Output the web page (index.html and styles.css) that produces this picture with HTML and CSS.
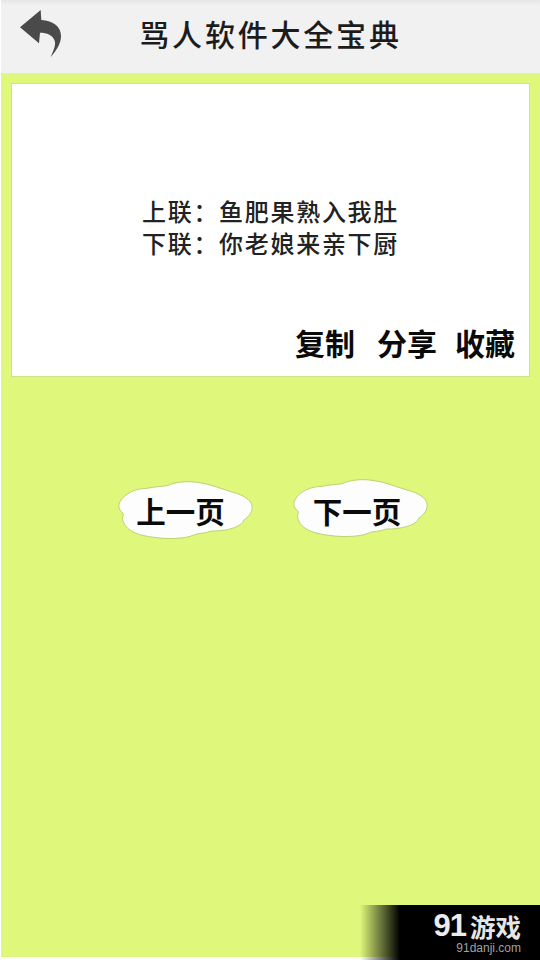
FILE: index.html
```html
<!DOCTYPE html>
<html lang="zh-CN">
<head>
<meta charset="utf-8">
<title>骂人软件大全宝典</title>
<link rel="stylesheet" href="styles.css">
</head>
<body>
<div class="screen">
  <header class="bar">
    <svg class="back" viewBox="0 0 240 210" aria-hidden="true">
      <path d="M122 30 L60 82 L117 130 L120 98 C140 98 160 105 165 125 C167 140 158 155 152 172 C170 150 183 130 183 108 C183 80 160 62 124 60 Z"/>
    </svg>
    <h1 class="title">骂人软件大全宝典</h1>
  </header>
  <main class="content">
    <section class="card">
      <div class="verse">
        <p>上联：鱼肥果熟入我肚</p>
        <p>下联：你老娘来亲下厨</p>
      </div>
      <div class="actions">
        <span class="action-first">复制</span>
        <span>分享</span>
        <span>收藏</span>
      </div>
    </section>
    <nav class="pager">
      <a class="cloud">
        <svg viewBox="20 30 410 180" aria-hidden="true"><path d="M25 105 C30 80 65 55 110 55 C130 50 150 50 170 47 C195 35 235 32 265 38 C300 42 335 58 378 70 C408 80 425 95 425 112 C425 130 412 142 400 150 C394 172 345 184 302 183 C282 192 265 188 250 195 C225 207 170 208 130 202 C90 197 50 187 38 155 C33 145 40 135 38 130 C30 125 24 115 25 105 Z"/></svg>
        <span>上一页</span>
      </a>
      <a class="cloud cloud-next">
        <svg viewBox="20 30 410 180" aria-hidden="true"><path d="M25 105 C30 80 65 55 110 55 C130 50 150 50 170 47 C195 35 235 32 265 38 C300 42 335 58 378 70 C408 80 425 95 425 112 C425 130 412 142 400 150 C394 172 345 184 302 183 C282 192 265 188 250 195 C225 207 170 208 130 202 C90 197 50 187 38 155 C33 145 40 135 38 130 C30 125 24 115 25 105 Z"/></svg>
        <span>下一页</span>
      </a>
    </nav>
  </main>
  <aside class="wm">
    <div class="wm-logo"><b>91</b><i>游戏</i></div>
    <div class="wm-url">91danji.com</div>
  </aside>
</div>
</body>
</html>
```
FILE: styles.css
```css
* { box-sizing: border-box; margin: 0; padding: 0; }
html, body { width: 540px; height: 960px; overflow: hidden; background: #fff; }
body { font-family: "Noto Sans CJK SC", "Liberation Sans", sans-serif; }
.screen { position: relative; width: 539px; height: 957px; margin-left: 1px; background: #dff77b; display: flex; flex-direction: column; }
.bar { height: 73px; background: linear-gradient(180deg, #e6e6e6 0, #f1f1f1 5px); display: flex; align-items: center; position: relative; justify-content: center; }
.back { position: absolute; left: -1px; top: 0; width: 80px; height: 70px; fill: #4a4a4a; }
.title { font-size: 30px; font-weight: 500; letter-spacing: 2.800px; color: #1c1c1c; line-height: 36px; margin-top: -7px; }
.content { flex: 1; display: flex; flex-direction: column; }
.card { margin: 10px 0 0 10px; width: 519px; height: 294px; background: #fff; border: 1px solid #cfe28c; position: relative; display: flex; flex-direction: column; }
.verse { margin-top: 111px; text-align: center; font-size: 24px; font-weight: 500; line-height: 32px; color: #222; letter-spacing: 1.700px; }
.actions { position: absolute; right: 14px; top: 238px; display: flex; gap: 18px; font-size: 30px; line-height: 40px; font-weight: 700; color: #0a0a0a; }
.action-first { margin-right: 4px; }
.pager { display: flex; margin: 103px 0 0 116px; gap: 38px; }
.cloud { position: relative; width: 137px; height: 60px; padding-right: 10px; display: flex; align-items: center; justify-content: center; }
.cloud svg { position: absolute; left: 0; top: 0; width: 137px; height: 60px; fill: #fdfdfd; stroke: #bcd274; stroke-width: 3; }
.cloud-next { padding-right: 7px; }
.cloud-next svg { top: -2px; }
.cloud span { position: relative; font-size: 29.500px; font-weight: 700; color: #0a0a0a; line-height: 40px; }
.wm { position: absolute; right: 0; bottom: -3px; width: 180px; height: 55px; background: linear-gradient(90deg, rgba(0,0,0,0) 0, #000 40px); text-align: right; padding: 7px 19px 0 0; }
.wm-logo { display: flex; justify-content: flex-end; align-items: center; height: 28px; gap: 4px; }
.wm-logo b { font-family: "Liberation Sans", sans-serif; font-size: 31px; font-weight: 700; letter-spacing: -1px; line-height: 28px; color: #ececec; }
.wm-logo i { font-style: normal; font-weight: 700; font-size: 25.500px; line-height: 28px; color: #e6e6e6; }
.wm-url { font-family: "Liberation Sans", sans-serif; font-size: 12px; line-height: 14px; margin-top: 1px; color: #a0a0a0; }
```
